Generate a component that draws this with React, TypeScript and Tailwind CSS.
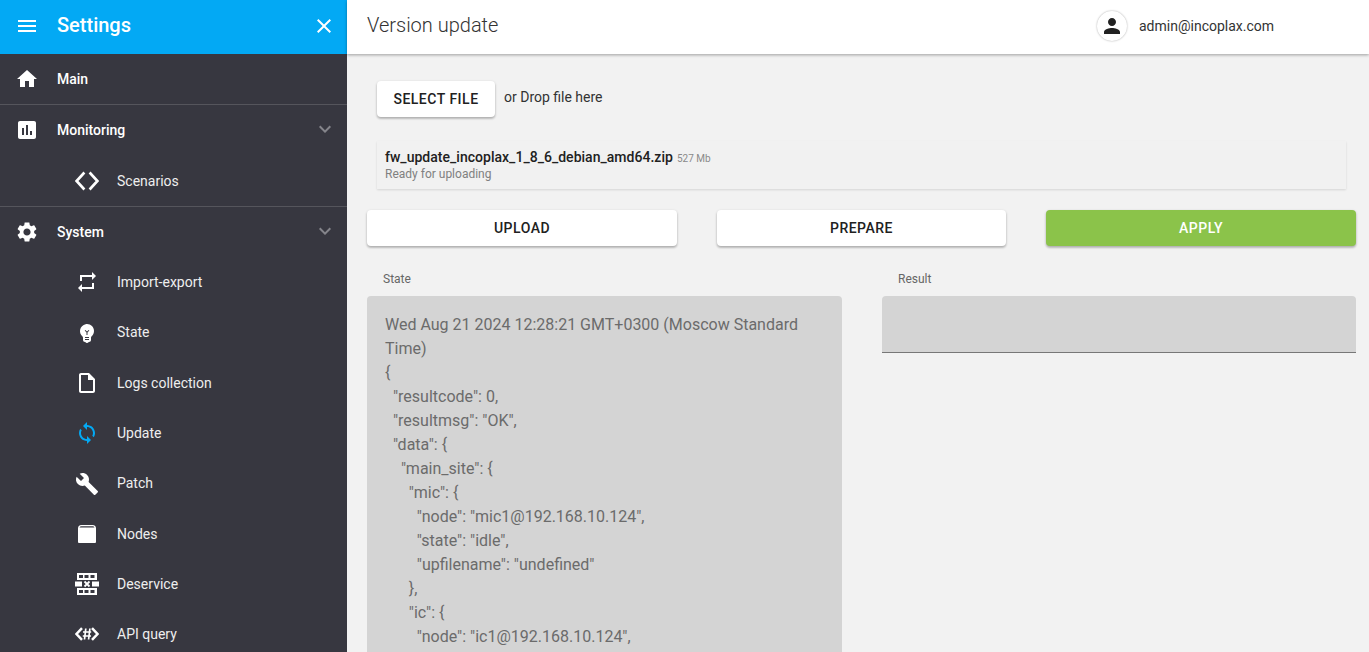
const font = "font-['Roboto',sans-serif]";

function Icon({ d, className }: { d: string; className?: string }) {
  return (
    <svg viewBox="0 0 24 24" fill="currentColor" className={className ?? "h-6 w-6 shrink-0"}>
      <path d={d} />
    </svg>
  );
}

const icons = {
  menu: "M3 18h18v-2H3v2zm0-5h18v-2H3v2zm0-7v2h18V6H3z",
  close: "M19 6.41L17.59 5 12 10.59 6.41 5 5 6.41 10.59 12 5 17.59 6.41 19 12 13.41 17.59 19 19 17.59 13.41 12z",
  home: "M10 20v-6h4v6h5v-8h3L12 3 2 12h3v8z",
  chart: "M19 3H5c-1.1 0-2 .9-2 2v14c0 1.1.9 2 2 2h14c1.1 0 2-.9 2-2V5c0-1.1-.9-2-2-2zM9 17H7v-7h2v7zm4 0h-2V7h2v10zm4 0h-2v-4h2v4z",
  gear: "M19.14 12.94c.04-.3.06-.61.06-.94 0-.32-.02-.64-.07-.94l2.03-1.58c.18-.14.23-.41.12-.61l-1.92-3.32c-.12-.22-.37-.29-.59-.22l-2.39.96c-.5-.38-1.03-.7-1.62-.94l-.36-2.54c-.04-.24-.24-.41-.48-.41h-3.84c-.24 0-.43.17-.47.41l-.36 2.54c-.59.24-1.13.57-1.62.94l-2.39-.96c-.22-.08-.47 0-.59.22L2.74 8.87c-.12.21-.08.47.12.61l2.03 1.58c-.05.3-.09.63-.09.94s.02.64.07.94l-2.03 1.58c-.18.14-.23.41-.12.61l1.92 3.32c.12.22.37.29.59.22l2.39-.96c.5.38 1.03.7 1.62.94l.36 2.54c.05.24.24.41.48.41h3.84c.24 0 .44-.17.47-.41l.36-2.54c.59-.24 1.13-.56 1.62-.94l2.39.96c.22.08.47 0 .59-.22l1.92-3.32c.12-.22.07-.47-.12-.61l-2.01-1.58zM12 15.6c-1.98 0-3.6-1.62-3.6-3.6s1.62-3.6 3.6-3.6 3.6 1.62 3.6 3.6-1.62 3.6-3.6 3.6z",
  chevron: "M16.59 8.59L12 13.17 7.41 8.59 6 10l6 6 6-6z",
  repeat: "M7 7h10v3l4-4-4-4v3H5v6h2V7zm10 10H7v-3l-4 4 4 4v-3h12v-6h-2v4z",
  bulb: "M12 3c-.46 0-.93.04-1.4.14-2.76.53-4.96 2.76-5.48 5.52-.48 2.61.48 5.01 2.22 6.56.43.38.66.91.66 1.47V19c0 1.1.9 2 2 2h.28c.35.6.98 1 1.72 1s1.38-.4 1.72-1H14c1.1 0 2-.9 2-2v-2.31c0-.55.22-1.09.64-1.46C18.09 13.95 19 12.08 19 10c0-3.87-3.13-7-7-7zm2 16h-4v-1h4v1zm0-2h-4v-1h4v1zm-1.5-5.59V14h-1v-2.59L9.67 9.59l.71-.71L12 10.5l1.62-1.62.71.71-1.83 1.82z",
  file: "M14 2H6c-1.1 0-1.99.9-1.99 2L4 20c0 1.1.89 2 1.99 2H18c1.1 0 2-.9 2-2V8l-6-6zM6 20V4h7v5h5v11H6z",
  sync: "M12 4V1L8 5l4 4V6c3.31 0 6 2.69 6 6 0 1.01-.25 1.97-.7 2.8l1.46 1.46C19.54 15.03 20 13.57 20 12c0-4.42-3.58-8-8-8zm0 14c-3.31 0-6-2.69-6-6 0-1.01.25-1.97.7-2.8L5.24 7.74C4.46 8.97 4 10.43 4 12c0 4.42 3.58 8 8 8v3l4-4-4-4v3z",
  wrench: "M22.7 19l-9.1-9.1c.9-2.3.4-5-1.5-6.9-2-2-5-2.4-7.4-1.3L9 6 6 9 1.6 4.7C.4 7.1.9 10.1 2.9 12.1c1.9 1.9 4.6 2.4 6.9 1.5l9.1 9.1c.4.4 1 .4 1.4 0l2.3-2.3c.5-.4.5-1.1.1-1.4z",
  person: "M12 12c2.21 0 4-1.79 4-4s-1.79-4-4-4-4 1.79-4 4 1.79 4 4 4zm0 2c-2.67 0-8 1.34-8 4v2h16v-2c0-2.66-5.33-4-8-4z",
};

function CodeIcon() {
  return (
    <svg viewBox="0 0 24 24" className="h-6 w-6 shrink-0" fill="none" stroke="currentColor" strokeWidth="2.6">
      <path d="M9.4 3.5L1.6 12l7.8 8.5M14.6 3.5L22.4 12l-7.8 8.5" />
    </svg>
  );
}

function NodesIcon() {
  return (
    <svg viewBox="0 0 24 24" className="h-6 w-6 shrink-0" fill="currentColor">
      <path d="M6.5 3h11A3.5 3.5 0 0 1 21 6.5V20a1 1 0 0 1-1 1H4a1 1 0 0 1-1-1V6.5A3.5 3.5 0 0 1 6.5 3z" />
      <path d="M6.5 4.2h11a2 2 0 0 1 2 1.3H4.500a2 2 0 0 1 2-1.300z" fill="#373740" />
    </svg>
  );
}

function WallIcon() {
  return (
    <svg viewBox="0 0 24 24" className="h-6 w-6 shrink-0" fill="currentColor">
      <path fillRule="evenodd" d="M2 1h20v7H2zM4 3v3h4V3zm5.5 0v3h4V3zm6 0v3h4V3zM2 16h20v7H2zm2 2v3h4v-3zm5.5 0v3h4v-3zm6 0v3h4v-3z" />
      <path d="M0 9.500h7v5H0zM17 9.500h7v5h-7z" />
      <path d="M9.500 9.500l5 5M14.500 9.500l-5 5" stroke="currentColor" strokeWidth="1.800" />
    </svg>
  );
}

function ApiIcon() {
  return (
    <svg viewBox="0 0 24 24" className="h-6 w-6 shrink-0" fill="none" stroke="currentColor">
      <path d="M7 6.200L1.500 12 7 17.800M17 6.200L22.500 12 17 17.800" strokeWidth="2.500" />
      <path d="M10.800 6.500l-1.300 11M14.900 6.500l-1.300 11M8 10h8.200M7.800 14h8.200" strokeWidth="1.700" />
    </svg>
  );
}

function SidebarRow({
  icon,
  label,
  sub,
  bold,
  active,
  open,
}: {
  icon: React.ReactNode;
  label: string;
  sub?: boolean;
  bold?: boolean;
  active?: boolean;
  open?: boolean;
}) {
  return (
    <div
      className={`flex h-[50.3px] shrink-0 items-center ${sub ? "pl-[75px]" : "pl-[15px]"} ${
        active ? "text-[#03a9f4]" : "text-white"
      }`}
    >
      {icon}
      <span
        className={`ml-[18px] pt-[0.6px] text-[14px] ${bold ? "font-medium" : "text-[#eeeeee]"} ${
          active ? "text-[#03a9f4]" : ""
        }`}
      >
        {label}
      </span>
      {open && <Icon d={icons.chevron} className="mb-[3px] ml-auto mr-[10px] h-6 w-6 text-[#85858b]" />}
    </div>
  );
}

function Sidebar() {
  return (
    <aside className="flex h-full w-[347px] shrink-0 flex-col overflow-hidden bg-[#373740]">
      <div className="flex h-[54px] shrink-0 items-center bg-[#03a9f4] pb-[2px] pl-[15px] pr-[11px] text-white">
        <Icon d={icons.menu} />
        <span className="mb-[3px] ml-[18px] text-[20px] font-medium">Settings</span>
        <Icon d={icons.close} className="ml-auto h-6 w-6" />
      </div>
      <SidebarRow bold label="Main" icon={<Icon d={icons.home} />} />
      <div className="h-px shrink-0 bg-[#55555c]" />
      <SidebarRow bold open label="Monitoring" icon={<Icon d={icons.chart} />} />
      <SidebarRow sub label="Scenarios" icon={<CodeIcon />} />
      <div className="h-px shrink-0 bg-[#55555c]" />
      <SidebarRow bold open label="System" icon={<Icon d={icons.gear} />} />
      <SidebarRow sub label="Import-export" icon={<Icon d={icons.repeat} />} />
      <SidebarRow sub label="State" icon={<Icon d={icons.bulb} />} />
      <SidebarRow sub label="Logs collection" icon={<Icon d={icons.file} />} />
      <SidebarRow sub active label="Update" icon={<Icon d={icons.sync} />} />
      <SidebarRow sub label="Patch" icon={<Icon d={icons.wrench} />} />
      <SidebarRow sub label="Nodes" icon={<NodesIcon />} />
      <SidebarRow sub label="Deservice" icon={<WallIcon />} />
      <SidebarRow sub label="API query" icon={<ApiIcon />} />
    </aside>
  );
}

const stateText = `Wed Aug 21 2024 12:28:21 GMT+0300 (Moscow Standard Time)
{
  "resultcode": 0,
  "resultmsg": "OK",
  "data": {
    "main_site": {
      "mic": {
        "node": "mic1@192.168.10.124",
        "state": "idle",
        "upfilename": "undefined"
      },
      "ic": {
        "node": "ic1@192.168.10.124",`;

const buttonShadow = "shadow-[0_2px_2px_rgba(0,0,0,0.14),0_1px_3px_rgba(0,0,0,0.2)]";

export default function App() {
  return (
    <div className={`flex h-[652px] w-full overflow-hidden bg-[#f2f2f2] ${font}`}>
      <Sidebar />
      <main className="flex min-w-0 flex-1 flex-col">
        <header className="flex h-[54px] shrink-0 items-center bg-white pb-[2px] pl-5 shadow-[0_1px_3px_rgba(0,0,0,0.35)]">
          <h1 className="mb-[3px] text-[20px] font-light text-[#333333]">Version update</h1>
          <div className="ml-auto flex w-[273px] items-center">
            <div className="ml-px flex h-[30px] w-[30px] items-center justify-center rounded-full bg-white text-[#212121] shadow-[0_0_2px_rgba(0,0,0,0.35)]">
              <Icon d={icons.person} className="h-6 w-6" />
            </div>
            <span className="ml-3 text-[14px] text-[#333333]">admin@incoplax.com</span>
          </div>
        </header>

        <div className="flex min-h-0 flex-1 flex-col overflow-hidden pl-5 pr-[13px]">
          <div className="mt-[27px] flex items-start pl-2.5">
            <button className={`flex h-9 w-[118px] items-center justify-center rounded bg-white text-[14px] font-medium tracking-[0.5px] text-[#212121] ${buttonShadow}`}>
              SELECT FILE
            </button>
            <span className="ml-[9px] mt-[6px] text-[14px] leading-5 text-[#333333]">or Drop file here</span>
          </div>

          <div className="ml-2.5 mr-2.5 mt-6 h-[48px] shrink-0 bg-[#f1f1f1] pl-2 pt-[8px] shadow-[0_1px_2px_rgba(0,0,0,0.12)]">
            <div className="flex items-baseline text-[14px] font-medium leading-4 tracking-[0.02px] text-[#212121]">
              fw_update_incoplax_1_8_6_debian_amd64.zip
              <span className="ml-1 text-[10px] font-normal text-[#8a8a8a]">527 Mb</span>
            </div>
            <div className="-mt-px text-[12px] leading-4 text-[#808080]">Ready for uploading</div>
          </div>

          <div className="mt-[21px] flex shrink-0 gap-10">
            <button className={`h-9 w-[310px] rounded bg-white text-[14px] font-medium tracking-[0.5px] text-[#212121] ${buttonShadow}`}>
              UPLOAD
            </button>
            <button className={`h-9 w-[289px] rounded bg-white text-[14px] font-medium tracking-[0.5px] text-[#212121] ${buttonShadow}`}>
              PREPARE
            </button>
            <button className={`h-9 w-[310px] rounded bg-[#8bc34a] text-[14px] font-medium tracking-[0.5px] text-white ${buttonShadow}`}>
              APPLY
            </button>
          </div>

          <div className="mt-[25px] flex min-h-0 flex-1 gap-10">
            <section className="flex w-[475px] flex-col">
              <div className="pl-4 text-[12px] leading-4 text-[#666666]">State</div>
              <div className="mt-[9px] flex-1 whitespace-pre-wrap rounded-t bg-[#d4d4d4] pl-[18px] pr-[18px] pt-[17px] text-[16px] leading-6 text-[#6b6b6b]">
                {stateText}
              </div>
            </section>
            <section className="flex-1">
              <div className="pl-4 text-[12px] leading-4 text-[#666666]">Result</div>
              <div className="mt-[9px] h-[57px] rounded-t border-b border-[#777777] bg-[#d4d4d4]" />
            </section>
          </div>
        </div>
      </main>
    </div>
  );
}
